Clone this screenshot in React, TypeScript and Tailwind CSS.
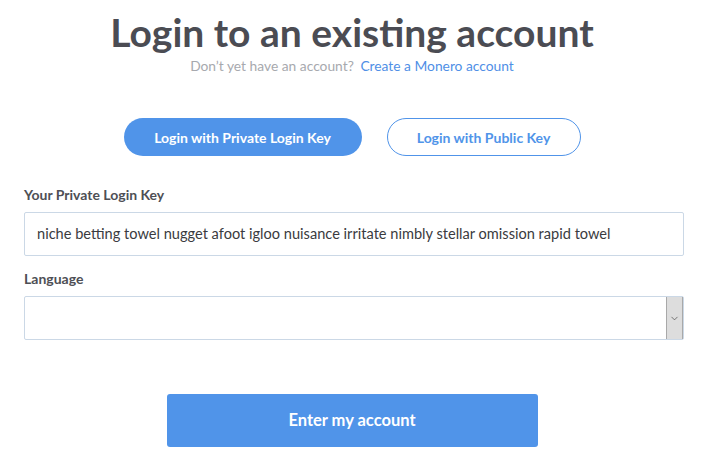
import { ChevronDown } from "lucide-react";

export default function App() {
  return (
    <div
      className="min-h-[462px] w-[704px] bg-white"
      style={{ fontFamily: "Lato, 'Open Sans', sans-serif" }}
    >
      <div className="flex flex-col items-center pt-[9px]">
        <h1 className="text-[39px] font-bold leading-[46px] text-[#4b4c53]">
          Login to an existing account
        </h1>
        <p className="mt-[2px] text-[13.8px] leading-[18px] text-[#a7a9ae]">
          Don’t yet have an account?{" "}
          <span className="ml-[3px] text-[#4f8fe6]">Create a Monero account</span>
        </p>

        <div className="mt-[43px] flex gap-[25px]">
          <button className="h-[38px] w-[238px] rounded-full bg-[#5094e9] text-[14px] font-bold text-white">
            Login with Private Login Key
          </button>
          <button className="h-[38px] w-[194px] rounded-full border border-[#5094e9] bg-white text-[14px] font-bold text-[#5094e9]">
            Login with Public Key
          </button>
        </div>
      </div>

      <div className="ml-[24px] mt-[29px] w-[660px]">
        <label className="block text-[14px] font-bold leading-[20px] text-[#4e4f55]">
          Your Private Login Key
        </label>
        <div className="mt-[7px] flex h-[44px] items-center rounded-[2px] border border-[#cbd8e6] px-[12px] text-[14.6px] text-[#3a3b40]">
          niche betting towel nugget afoot igloo nuisance irritate nimbly stellar omission rapid towel
        </div>

        <label className="mt-[13px] block text-[14px] font-bold leading-[20px] text-[#4e4f55]">
          Language
        </label>
        <div className="mt-[7px] flex h-[44px] justify-end rounded-[2px] border border-[#cbd8e6]">
          <div className="flex w-[17px] items-center justify-center border-x border-[#a9a9a9] bg-[#dddddd]">
            <ChevronDown size={11} strokeWidth={1.5} className="text-[#444]" />
          </div>
        </div>
      </div>

      <div className="mt-[54px] flex justify-center">
        <button className="h-[53px] w-[371px] rounded-[3px] bg-[#5094e9] text-[16.5px] font-bold text-white">
          Enter my account
        </button>
      </div>
    </div>
  );
}
